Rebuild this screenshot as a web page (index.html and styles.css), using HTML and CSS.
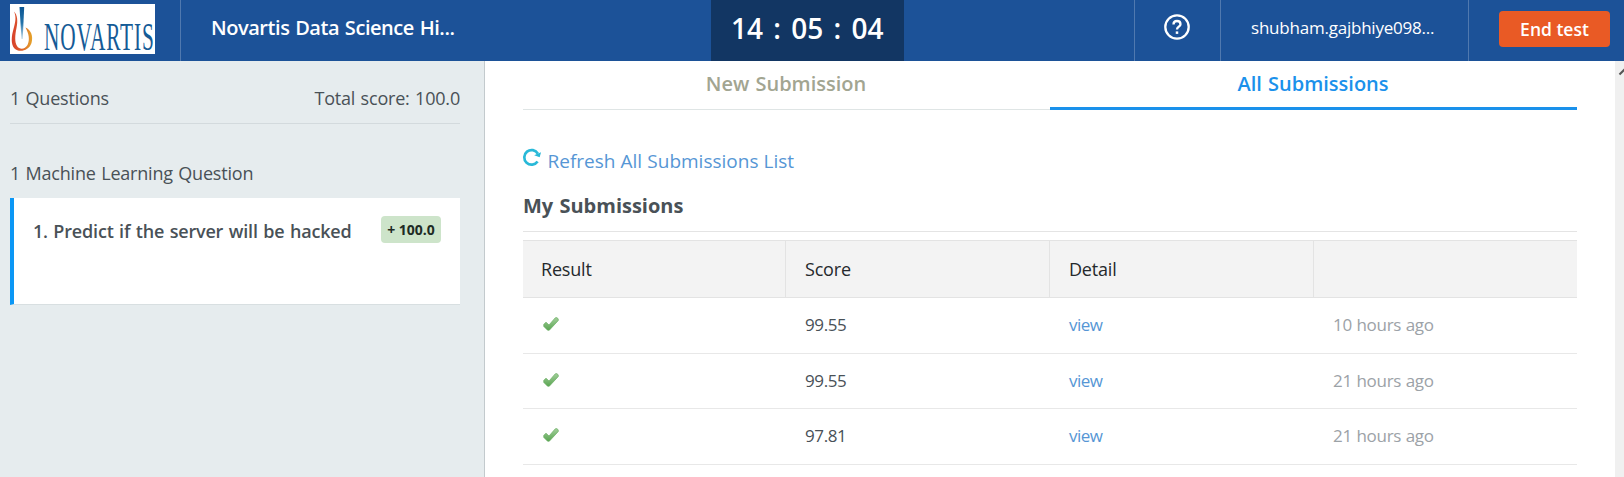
FILE: index.html
```html
<!DOCTYPE html>
<html lang="en">
<head>
<meta charset="utf-8">
<title>Novartis Data Science Hiring</title>
<link rel="stylesheet" href="styles.css">
</head>
<body>
<svg class="defs" width="0" height="0" aria-hidden="true">
  <defs>
    <linearGradient id="tick" x1="0" y1="0" x2="0" y2="1"><stop offset="0" stop-color="#a2cf9a"/><stop offset="1" stop-color="#5aa552"/></linearGradient>
    <linearGradient id="flame" x1="0" y1="0" x2="1" y2="0"><stop offset="0" stop-color="#d8402c"/><stop offset=".45" stop-color="#dd5c2a"/><stop offset="1" stop-color="#e5a52b"/></linearGradient>
    <linearGradient id="stem" x1="0" y1="0" x2="0" y2="1"><stop offset="0" stop-color="#0c5592"/><stop offset=".5" stop-color="#2272a9"/><stop offset="1" stop-color="#c4dcea"/></linearGradient>
    <symbol id="check" viewBox="0 0 16 14"><path d="M.7 7.4 3 5.2 6 8 12.2.9Q13 .2 14 .8L15.2 1.8 15.3 3.5 6.3 13.2H4.6L.8 9.4Z" fill="url(#tick)" stroke="#68ad61" stroke-width=".7"/></symbol>
  </defs>
</svg>
<header class="topbar">
  <div class="brand">
    <svg class="logo" width="145" height="50" viewBox="0 0 145 50">
      <rect width="145" height="50" fill="#fff"/>
      <path d="M4 7.500C7.500 11 8 17 6.500 24C5 31 4.500 38 7 42C9.500 46 15 45.500 17.500 41C20 36 19 30 15.500 23.500C21 26 23.500 32 21.500 39C19 47 9 49 4.500 44.500C.5 40 1.500 32 3.500 25C5.500 18 6.500 13 4 7.500Z" fill="url(#flame)"/>
      <path d="M9.500 3H14.200L12.700 35H11.500Z" fill="url(#stem)"/>
      <text class="logo-text" transform="translate(34 45.700) scale(.54 1)" x="0" y="0">NOVARTIS</text>
    </svg>
  </div>
  <div class="title">Novartis Data Science Hi...</div>
  <div class="timer">14 : 05 : 04</div>
  <div class="help">
    <svg width="28" height="28" viewBox="0 0 28 28" fill="none" stroke="#fff">
      <circle cx="14" cy="14" r="11.700" stroke-width="2.300"/>
      <path d="M10.500 11.400C10.500 9.300 12 8 14 8S17.500 9.300 17.500 11.200C17.500 13.500 14 14 14 16.500" stroke-width="2.300"/>
      <path d="M14 18.400V20.900" stroke-width="2.500"/>
    </svg>
  </div>
  <div class="user">shubham.gajbhiye098...</div>
  <div class="end"><button class="end-btn">End test</button></div>
</header>
<div class="layout">
  <aside class="sidebar">
    <div class="summary"><span class="count">1 Questions</span><span class="total">Total score: 100.0</span></div>
    <div class="section">1 Machine Learning Question</div>
    <div class="card"><span class="question">1. Predict if the server will be hacked</span><span class="badge">+ 100.0</span></div>
  </aside>
  <main class="main">
    <nav class="tabs"><div class="tab"><span>New Submission</span></div><div class="tab active"><span>All Submissions</span></div></nav>
    <div class="refresh">
      <svg width="20" height="20" viewBox="0 0 20 20" fill="none">
        <path d="M15.600 14.500A7.300 7.300 0 1 1 15.900 6.700" stroke="#29b9d8" stroke-width="2.700"/>
        <path d="M12.200 8.300 19 5.200 17.700 10.300Z" fill="#29b9d8"/>
      </svg>
      <a class="refresh-link">Refresh All Submissions List</a>
    </div>
    <h2 class="heading"><span>My Submissions</span></h2>
    <div class="table">
      <div class="row head"><div><span>Result</span></div><div><span>Score</span></div><div><span>Detail</span></div><div></div></div>
      <div class="row"><div><svg class="check"><use href="#check"/></svg></div><div><span class="score">99.55</span></div><div><a class="view">view</a></div><div><span class="time">10 hours ago</span></div></div>
      <div class="row short"><div><svg class="check"><use href="#check"/></svg></div><div><span class="score">99.55</span></div><div><a class="view">view</a></div><div><span class="time">21 hours ago</span></div></div>
      <div class="row"><div><svg class="check"><use href="#check"/></svg></div><div><span class="score">97.81</span></div><div><a class="view">view</a></div><div><span class="time">21 hours ago</span></div></div>
    </div>
  </main>
  <div class="scrollbar"><svg width="9" height="22" viewBox="0 0 9 22"><path d="M4.500 13.500 10 8" fill="none" stroke="#555" stroke-width="2"/></svg></div>
</div>
</body>
</html>
```
FILE: styles.css
```css
* { box-sizing: border-box; }
body { margin: 0; width: 1624px; height: 477px; overflow: hidden; background: #fff; color: #495157; font-family: "Open Sans", "Noto Sans", sans-serif; font-size: 18px; }
.defs { display: block; height: 0; }
.topbar { display: grid; grid-template-columns: 181px 530px 193px 230px 87px 248px 155px; height: 61px; background: #1c5298; color: #fff; }
.topbar > div { height: 61px; white-space: nowrap; }
.brand { padding: 4px 0 0 10px; border-right: 1px solid #5079af; }
.logo { display: block; overflow: visible; }
.logo-text { font-family: "Liberation Serif", serif; font-size: 39.5px; letter-spacing: 1.6px; fill: #155b96; }
.title { padding-left: 30px; line-height: 56px; font-size: 20px; font-weight: 600; letter-spacing: -.45px; word-spacing: 1px; }
.timer { padding-left: 20px; background: #123663; line-height: 56px; font-size: 28px; font-weight: 600; word-spacing: 3px; }
.help { grid-column: 5; border-left: 1px solid #5079af; border-right: 1px solid #5079af; padding: 12.5px 0 0 28px; }
.user { padding-left: 30px; line-height: 56px; font-size: 17px; letter-spacing: -.22px; border-right: 1px solid #5079af; }
.end { padding: 11px 0 0 30px; }
.end-btn { display: block; width: 111px; height: 36px; border: 0; border-radius: 4px; padding: 0; background: #e95a25; color: #fff; font: 600 17.5px/36px "Open Sans", sans-serif; }
.layout { display: grid; grid-template-columns: 485px 1130px 9px; height: 416px; }
.sidebar { background: #e6ecee; border-right: 1px solid #c3cacd; padding: 0 24px 0 10px; }
.summary { display: flex; justify-content: space-between; height: 63px; padding-top: 24px; line-height: 26px; letter-spacing: -.2px; word-spacing: 1px; border-bottom: 1px solid #d3dadd; white-space: nowrap; }
.section { height: 74px; padding-top: 36px; line-height: 26px; letter-spacing: -.2px; word-spacing: 1px; white-space: nowrap; }
.card { display: flex; justify-content: space-between; height: 107px; background: #fff; border-left: 4px solid #0b97f5; border-bottom: 1px solid #d8dfe1; padding: 18px 19px 0 19px; }
.question { line-height: 30px; font-weight: 600; letter-spacing: -.18px; word-spacing: 1px; white-space: nowrap; }
.badge { width: 60px; height: 27px; border-radius: 4px; background: #cde4ca; color: #202b24; text-align: center; line-height: 27px; font-size: 14px; font-weight: 700; white-space: nowrap; }
.main { padding: 0 38px; }
.tabs { display: grid; grid-template-columns: 1fr 1fr; height: 49px; }
.tab { border-bottom: 1px solid #dfe5e5; padding-right: 1px; text-align: center; line-height: 46px; font-size: 20px; font-weight: 600; word-spacing: 1px; color: #a2a591; }
.tab.active { color: #1a91eb; border-bottom: 3px solid #1a91eb; }
.refresh { display: flex; height: 76px; padding-top: 38px; }
.refresh svg { margin: -1px 5.5px 0 -1px; }
.refresh-link { color: #5696d5; font-size: 19px; line-height: 27px; word-spacing: .2px; white-space: nowrap; }
.heading { margin: 0 0 8px; height: 46px; border-bottom: 1px solid #e4e4e4; font-size: 20px; line-height: 39px; font-weight: 700; word-spacing: 1px; }
.row { display: grid; grid-template-columns: 263px 264px 264px 263px; height: 56px; border-bottom: 1px solid #e8e8e8; line-height: 54px; font-size: 17px; letter-spacing: -.2px; }
.row > div { padding-left: 19px; }
.row > div:first-child { padding-left: 18px; }
.row.head { height: 58px; background: #f3f3f3; border-top: 1px solid #e3e3e3; border-color: #e3e3e3; line-height: 57px; font-size: 18px; color: #25292c; }
.head > div:not(:last-child) { border-right: 1px solid #e3e3e3; }
.row.short { height: 55px; }
.check { display: block; width: 16px; height: 14px; margin: 18.5px 0 0 2px; }
.view { color: #5696d5; letter-spacing: -.5px; }
.score { letter-spacing: -.4px; }
.time { color: #9ca2a7; letter-spacing: -.3px; word-spacing: .5px; }
.scrollbar { background: #f0f0f0; }
.scrollbar svg { display: block; }
```
